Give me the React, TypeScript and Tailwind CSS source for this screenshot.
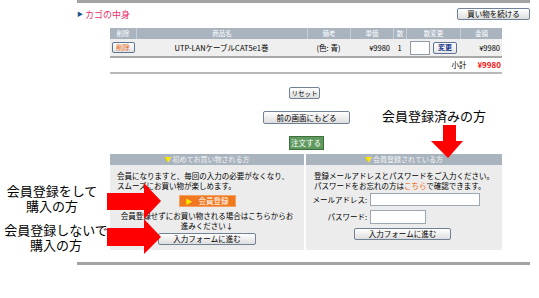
import React from "react";

const jp = "font-['Noto_Sans_CJK_JP','Noto_Sans',sans-serif]";

function Btn({ children, className = "" }: { children: React.ReactNode; className?: string }) {
  return (
    <div
      className={`flex items-center justify-center whitespace-nowrap border border-[#6f8296] rounded-[2px] bg-linear-to-b from-white to-[#dedede] leading-none text-black ${className}`}
    >
      {children}
    </div>
  );
}

export default function App() {
  return (
    <div className={`relative w-[539px] h-[298px] bg-white overflow-hidden ${jp}`}>
      <div className="ml-[77px] w-[453px]">
        <div className="h-[3px] bg-[#a3a3a3]" />
        <div className="mt-[5px] h-[12px] flex items-center justify-between">
          <div className="flex items-center">
            <span className="text-[6px] leading-none text-[#1d4f8a] mr-[2px]">▶</span>
            <span className="text-[9px] leading-none text-[#e8336e]">カゴの中身</span>
          </div>
          <Btn className="w-[73px] h-[12px] text-[7.5px]">買い物を続ける</Btn>
        </div>

        <div className="mt-[8px] ml-[33px] w-[392px]">
          <div className="h-[11px] flex bg-[#a9b4bf] text-white text-[6.5px] leading-none">
            <div className="w-[26px] flex items-center justify-center">削除</div>
            <div className="w-[171px] flex items-center justify-center border-l border-[#c6ced6]">商品名</div>
            <div className="w-[43px] flex items-center justify-center border-l border-[#c6ced6]">備考</div>
            <div className="w-[43px] flex items-center justify-center border-l border-[#c6ced6]">単価</div>
            <div className="w-[13px] flex items-center justify-center border-l border-[#c6ced6]">数</div>
            <div className="w-[54px] flex items-center justify-center border-l border-[#c6ced6]">数変更</div>
            <div className="flex-1 flex items-center justify-center border-l border-[#c6ced6]">金額</div>
          </div>
          <div className="h-[17px] flex items-center bg-[#efefef] text-[7.5px] leading-none text-black">
            <div className="w-[26px] flex justify-center">
              <div className="w-[23px] h-[11px] flex items-center justify-center border border-[#5d7592] rounded-[2px] bg-linear-to-b from-white to-[#e4e4e4] text-[#e4600a] text-[7px]">
                削除
              </div>
            </div>
            <div className="w-[171px] text-center">UTP-LANケーブルCAT5e1巻</div>
            <div className="w-[43px] text-center">(色: 青)</div>
            <div className="w-[43px] text-right pr-[3px]">¥9980</div>
            <div className="w-[13px] text-center">1</div>
            <div className="w-[54px] flex items-center gap-[3px] pl-[4px]">
              <div className="w-[20px] h-[14px] bg-white border border-[#8d9cab]" />
              <div className="w-[24px] h-[12px] flex items-center justify-center border border-[#5d7592] rounded-[2px] bg-linear-to-b from-white to-[#e4e4e4] text-[#1d3c8c] font-bold text-[7px]">
                変更
              </div>
            </div>
            <div className="flex-1 text-right pr-[2px]">¥9980</div>
          </div>
          <div className="h-[2px] bg-[#a8a8a8]" />
          <div className="h-[14px] flex items-center justify-end text-[7.5px] leading-none">
            <span className="text-black">小計</span>
            <span className="ml-[11px] mr-[1px] text-[#ff1010] font-bold text-[8px]">¥9980</span>
          </div>
          <div className="h-[2px] bg-[#b8b8b8]" />

          <div className="flex flex-col items-center">
            <Btn className="mt-[13px] w-[31px] h-[12px] text-[6.5px] ml-[-3px]">リセット</Btn>
            <Btn className="mt-[12px] w-[87px] h-[13px] ml-[1px] text-[7.5px]">前の画面にもどる</Btn>
            <div className="mt-[12px] w-[35px] h-[14px] flex items-center justify-center whitespace-nowrap border border-[#3e6e3e] bg-[#5e9a5e] text-white text-[7.5px] leading-none">
              注文する
            </div>
          </div>

          <div className="mt-[4px] flex gap-[2px] text-[7.5px] leading-[9.5px] text-black">
            <div className="w-[194px] flex flex-col">
              <div className="h-[11px] bg-[#a9b4bf] flex items-center justify-center text-[#f4f4f4] text-[7px] leading-none">
                <span className="text-[#ffe600] text-[7px] mr-[1px]">▼</span>初めてお買い物される方
              </div>
              <div className="h-[85px] bg-[#ececec] flex flex-col">
                <div className="pt-[6px] pl-[7px]">
                  <div>会員になりますと、毎回の入力の必要がなくなり、</div>
                  <div>スムーズにお買い物が楽しめます。</div>
                </div>
                <div className="mt-[5px] flex justify-center">
                  <div className="w-[57px] h-[12px] bg-[#f07820] border border-[#f6a060] flex items-center pl-[6px] text-white text-[7.5px] leading-none">
                    <span className="text-[#ffe600] text-[7px] mr-[6px]">▶</span>会員登録
                  </div>
                </div>
                <div className="mt-[4px] text-center px-[4px]">
                  <div>会員登録せずにお買い物される場合はこちらからお</div>
                  <div>進みください↓</div>
                </div>
                <div className="mt-[3px] flex justify-center">
                  <Btn className="w-[98px] h-[12px] text-[7.5px]">入力フォームに進む</Btn>
                </div>
              </div>
            </div>
            <div className="w-[196px] flex flex-col">
              <div className="h-[11px] bg-[#a9b4bf] flex items-center justify-center text-[#f4f4f4] text-[7px] leading-none">
                <span className="text-[#ffe600] text-[7px] mr-[1px]">▼</span>会員登録されている方
              </div>
              <div className="h-[85px] bg-[#ececec] flex flex-col">
                <div className="pt-[6px] pl-[8px]">
                  <div>登録メールアドレスとパスワードをご入力ください。</div>
                  <div>
                    パスワードをお忘れの方は<span className="text-[#f26a10]">こちら</span>で確認できます。
                  </div>
                </div>
                <div className="mt-[3px] flex items-center">
                  <div className="w-[64px] text-right pr-[3px]">メールアドレス:</div>
                  <div className="w-[110px] h-[13px] bg-white border border-[#9aa8b6]" />
                </div>
                <div className="mt-[4px] flex items-center">
                  <div className="w-[64px] text-right pr-[3px]">パスワード:</div>
                  <div className="w-[56px] h-[14px] bg-white border border-[#9aa8b6]" />
                </div>
                <div className="mt-[4px] flex justify-center">
                  <Btn className="w-[97px] h-[12px] mr-[3px] text-[7.5px]">入力フォームに進む</Btn>
                </div>
              </div>
            </div>
          </div>
        </div>

        <div className="mt-[12px] h-[3px] bg-[#a3a3a3]" />
      </div>

      {/* annotations */}
      <div className="absolute left-[382px] top-[109px] text-[13px] leading-none text-black whitespace-nowrap">
        会員登録済みの方
      </div>
      <div className="absolute left-0 top-[183px] w-[104px] text-center text-[13px] leading-[15px] text-black">
        <div>会員登録をして</div>
        <div>購入の方</div>
      </div>
      <div className="absolute left-[3px] top-[222px] w-[106px] text-center text-[13px] leading-[15px] text-black">
        <div>会員登録しないで</div>
        <div>購入の方</div>
      </div>
      <svg className="absolute left-0 top-0 pointer-events-none" width="539" height="298" viewBox="0 0 539 298">
        <polygon fill="#ff0000" points="107,193 144,193 144,183 161,201 144,219 144,210 107,210" />
        <polygon fill="#ff0000" points="107,228 144,228 144,219 161,237 144,254 144,246 107,246" />
        <polygon fill="#ff0000" points="443,125 456,125 456,141 463,141 448,158 431,141 443,141" />
      </svg>
    </div>
  );
}
